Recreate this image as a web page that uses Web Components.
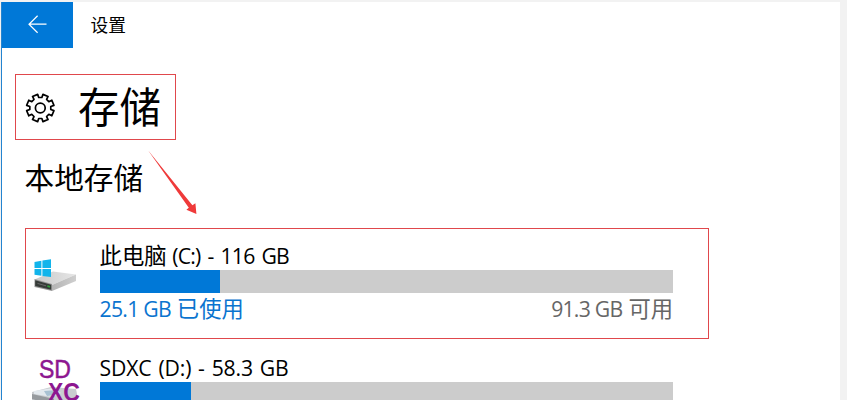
<!DOCTYPE html>
<html lang="zh-CN">
<head>
<meta charset="utf-8">
<title>设置</title>
<style>
  html, body { margin: 0; height: 100%; overflow: hidden; background: #f2f2f2; }
  body { font-family: "Open Sans", "Noto Sans CJK SC", sans-serif; color: #000; }
</style>
</head>
<body>
<settings-window>
  <title-bar slot="bar">设置</title-bar>
  <page-heading>存储</page-heading>
  <section-title>本地存储</section-title>
  <storage-drive framed percent="21" style="--name-spacing:-.8px;--name-words:2.3px">
    <system-drive-icon slot="icon"></system-drive-icon>
    <span slot="cjk">此电脑</span>
    <span slot="name">(C:) - 116 GB</span>
    <span slot="used">25.1 GB</span>
    <span slot="used-label">已使用</span>
    <span slot="free">91.3 GB</span>
    <span slot="free-label">可用</span>
  </storage-drive>
  <storage-drive percent="16" style="--name-spacing:-.15px;--name-words:1.5px">
    <card-drive-icon slot="icon"></card-drive-icon>
    <span slot="name">SDXC (D:) - 58.3 GB</span>
  </storage-drive>
</settings-window>

<script>
function define(name, html, setup) {
  customElements.define(name, class extends HTMLElement {
    constructor() {
      super();
      const root = this.attachShadow({ mode: 'open' });
      root.innerHTML = html;
      if (setup) setup(this, root);
    }
  });
}

// WINDOW
define('settings-window', `
  <style>
    :host { display: block; box-sizing: border-box; height: 400px; padding: 2px 7px 0 1px; overflow: hidden; position: relative; }
    .frame { height: 398px; background: #fff; border-left: 1px solid #2484d0; box-sizing: border-box; overflow: hidden; }
    .content { padding: 26px 0 0 13px; }
    .pointer { position: absolute; left: 140px; top: 142px; }
  </style>
  <div class="frame">
    <slot name="bar"></slot>
    <div class="content"><slot></slot></div>
  </div>
  <svg class="pointer" width="64" height="80" viewBox="140 142 64 80">
    <path d="M148 150.3L192.4 205.2L195.4 203.2L196.4 214L186.4 209.8L188.8 207.8Z" fill="#ef3a3a"/>
  </svg>
`);

// TITLE BAR
define('title-bar', `
  <style>
    :host { display: flex; align-items: center; height: 46px; font-size: 17.7px; line-height: 46px; }
    .back { width: 72px; height: 46px; margin-left: -1px; background: #0078d7; }
    svg { display: block; }
    .text { margin-left: 17.5px; }
  </style>
  <div class="back">
    <svg width="72" height="46" viewBox="0 0 72 46" fill="none" stroke="#fff" stroke-width="1.2">
      <path d="M45.5 22.2H28M36.6 13.7L28 22.2L36.6 30.7"/>
    </svg>
  </div>
  <div class="text"><slot></slot></div>
`);

// HEADING WITH GEAR
define('page-heading', `
  <style>
    :host { display: flex; align-items: center; box-sizing: border-box; width: 161px; height: 66px; border: 1px solid #e0484c; font-size: 41.5px; line-height: 64px; }
    svg { flex: none; margin: 1px 0 0 8.4px; }
    .text { margin-left: 21.6px; }
  </style>
  <svg width="32" height="32" viewBox="-16.3 -16 32 32" fill="none" stroke="#000" stroke-width="1.7" stroke-linejoin="round">
    <path class="gear"/><circle r="4.9"/>
  </svg>
  <div class="text"><slot></slot></div>
`, (el, root) => {
  const steps = [[-14, 10.6], [-11.5, 13.9], [11.5, 13.9], [14, 10.6]];
  const pts = [];
  for (let i = 0; i < 8; i++) {
    for (const [off, r] of steps) {
      const a = (22.5 + i * 45 + off) * Math.PI / 180;
      pts.push((Math.cos(a) * r).toFixed(2) + ' ' + (Math.sin(a) * r).toFixed(2));
    }
  }
  root.querySelector('.gear').setAttribute('d', 'M' + pts.join('L') + 'Z');
});

define('section-title', `
  <style>
    :host { display: block; height: 88px; padding-left: 9.5px; box-sizing: border-box; font-size: 29.7px; line-height: 76px; }
  </style>
  <slot></slot>
`);

// DRIVE ROW
define('storage-drive', `
  <style>
    :host { display: flex; box-sizing: border-box; width: 684px; height: 111px; margin: 0 0 1px 10px; padding: 13px 35px 0 0; border: 1px solid transparent; font-size: 21.2px; }
    :host([framed]) { border-color: #e0484c; }
    .icon { width: 73.6px; flex: none; }
    .info { flex: 1; }
    .row { display: flex; height: 28px; line-height: 27px; white-space: pre; }
    .cjk { font-size: 22.4px; }
    .cjk ::slotted(*) { margin-right: 5.5px; }
    .name { letter-spacing: var(--name-spacing); word-spacing: var(--name-words); }
    .bar { height: 23px; background: #ccc; }
    .fill { height: 100%; background: #0078d7; }
    .used { color: #0a74cf; gap: 6px; }
    .free { color: #666; margin-left: auto; display: flex; gap: 6px; }
    .num { letter-spacing: -.75px; }
    .label { font-size: 22.3px; }
    .used, .free { line-height: 31px; }
  </style>
  <div class="icon"><slot name="icon"></slot></div>
  <div class="info">
    <div class="row"><span class="cjk"><slot name="cjk"></slot></span><span class="name"><slot name="name"></slot></span></div>
    <div class="bar"><div class="fill"></div></div>
    <div class="row used">
      <span class="num"><slot name="used"></slot></span><span class="label"><slot name="used-label"></slot></span>
      <div class="free"><span class="num"><slot name="free"></slot></span><span class="label"><slot name="free-label"></slot></span></div>
    </div>
  </div>
`, (el, root) => {
  root.querySelector('.fill').style.width = el.getAttribute('percent') + '%';
});

define('system-drive-icon', `
  <style>:host { display: block; padding: 15px 0 0 6px; } svg { display: block; }</style>
  <svg width="48" height="40" viewBox="32 256 48 40">
    <defs>
      <linearGradient id="top" x1="0" x2="1"><stop offset="0" stop-color="#c9c9c9"/><stop offset="1" stop-color="#e6e6e6"/></linearGradient>
      <linearGradient id="side" x1="0" x2="1"><stop offset="0" stop-color="#b4b4b4"/><stop offset="1" stop-color="#cfcfcf"/></linearGradient>
    </defs>
    <path d="M34.5 278.5L53 270.5L76 273.5L52 284Z" fill="url(#top)"/>
    <path d="M52 284L76 273.5V280L52 290Z" fill="url(#side)"/>
    <path d="M34.5 278L52 283V290L34.5 286Z" fill="#969696"/>
    <path d="M35.2 279.2L51.2 283.8V288.8L35.2 285Z" fill="#363b38"/>
    <path d="M37.5 282.4L46 284.8" stroke="#686868"/>
    <path d="M47.3 285L50 285.8" stroke="#2fa03a" stroke-width="1.8"/>
    <path d="M34.5 260.9L41.4 259.8V267H34.5ZM42.4 259.6L51 258.3V267H42.4ZM34.5 268H41.4V274.8L34.5 273.8ZM42.4 268H51V276L42.4 274.9Z" fill="#12b4eb"/>
  </svg>
`);

define('card-drive-icon', `
  <style>:host { display: block; padding: 0 0 0 4px; } svg { display: block; }</style>
  <svg width="56" height="60" viewBox="30 354 56 60">
    <path d="M32 392L51 387L76 389L78 399L56 406L32 400Z" fill="#c9ccd0"/>
    <path d="M34 391L53 388L61 393L52 397L34 394Z" fill="#e3e9ee"/>
    <path d="M44 391L58 390L54 395L47 396Z" fill="#a8c1d2"/>
    <path d="M32 394L54 399V405L32 399Z" fill="#969a9e"/>
    <g font-family="Liberation Sans, sans-serif" font-size="26" fill="#8d1690">
      <text x="39" y="377.5" textLength="32" lengthAdjust="spacingAndGlyphs" stroke="#8d1690" stroke-width=".5">SD</text>
      <text x="48" y="401" textLength="32" lengthAdjust="spacingAndGlyphs" font-weight="bold">XC</text>
    </g>
  </svg>
`);
</script>
</body>
</html>
